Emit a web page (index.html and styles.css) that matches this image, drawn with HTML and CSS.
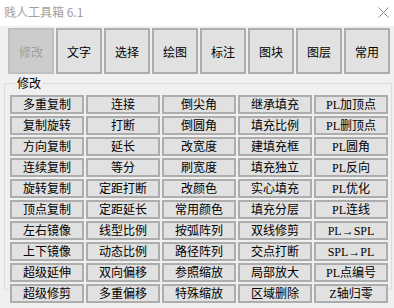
FILE: index.html
```html
<!DOCTYPE html>
<html lang="zh-CN">
<head>
  <meta charset="UTF-8">
  <title>贱人工具箱 6.1</title>
  <link rel="stylesheet" href="styles.css">
</head>
<body>
  <div class="window">
    <div class="titlebar">
      <span class="title">贱人工具箱 6.1</span>
      <svg class="close" width="11" height="11" viewBox="0 0 11 11">
        <path d="M0.5 0.5L10.5 10.5M10.5 0.5L0.5 10.5" stroke="#8c8c8c" stroke-width="1" fill="none"/>
      </svg>
    </div>

    <div class="tabs">
      <div class="tab active">修改</div>
      <div class="tab">文字</div>
      <div class="tab">选择</div>
      <div class="tab">绘图</div>
      <div class="tab">标注</div>
      <div class="tab">图块</div>
      <div class="tab">图层</div>
      <div class="tab">常用</div>
    </div>

    <fieldset class="group">
      <legend>修改</legend>
      <div class="grid">
        <div class="btn">多重复制</div><div class="btn">连接</div><div class="btn">倒尖角</div><div class="btn">继承填充</div><div class="btn">PL加顶点</div>
        <div class="btn">复制旋转</div><div class="btn">打断</div><div class="btn">倒圆角</div><div class="btn">填充比例</div><div class="btn">PL删顶点</div>
        <div class="btn">方向复制</div><div class="btn">延长</div><div class="btn">改宽度</div><div class="btn">建填充框</div><div class="btn">PL圆角</div>
        <div class="btn">连续复制</div><div class="btn">等分</div><div class="btn">刷宽度</div><div class="btn">填充独立</div><div class="btn">PL反向</div>
        <div class="btn">旋转复制</div><div class="btn">定距打断</div><div class="btn">改颜色</div><div class="btn">实心填充</div><div class="btn">PL优化</div>
        <div class="btn">顶点复制</div><div class="btn">定距延长</div><div class="btn">常用颜色</div><div class="btn">填充分层</div><div class="btn">PL连线</div>
        <div class="btn">左右镜像</div><div class="btn">线型比例</div><div class="btn">按弧阵列</div><div class="btn">双线修剪</div><div class="btn">PL→SPL</div>
        <div class="btn">上下镜像</div><div class="btn">动态比例</div><div class="btn">路径阵列</div><div class="btn">交点打断</div><div class="btn">SPL→PL</div>
        <div class="btn">超级延伸</div><div class="btn">双向偏移</div><div class="btn">参照缩放</div><div class="btn">局部放大</div><div class="btn">PL点编号</div>
        <div class="btn">超级修剪</div><div class="btn">多重偏移</div><div class="btn">特殊缩放</div><div class="btn">区域删除</div><div class="btn">Z轴归零</div>
      </div>
    </fieldset>
  </div>
</body>
</html>
```

FILE: styles.css
```css
body {
  margin: 0;
  padding: 0;
  font-family: "Noto Sans CJK SC", sans-serif;
  font-size: 12px;
}

.window {
  width: 394px;
  height: 308px;
  background: #f0f0f0;
  overflow: hidden;
}

/* title bar */

.titlebar {
  height: 26px;
  background: #ffffff;
  display: flex;
  align-items: center;
  justify-content: space-between;
  padding: 0 4px 2px 4px;
  box-sizing: border-box;
}
.title {
  color: #a0a0a0;
  font-size: 12px;
  line-height: 14px;
}
.close {
  margin-right: 1px;
}

/* tabs */

.tabs {
  display: flex;
  gap: 2px;
  padding: 2px 0 0 8px;
}
.tab {
  width: 46px;
  height: 46px;
  box-sizing: border-box;
  border: 2px solid #adadad;
  background: #e1e1e1;
  color: #000;
  display: flex;
  align-items: center;
  justify-content: center;
  font-size: 12px;
}
.tab.active {
  background: #cccccc;
  border-color: #bfbfbf;
  color: #a0a0a0;
}

/* group box */

.group {
  margin: 1px 2px 0 4px;
  padding: 4px 0 0 5px;
  border: 1px solid #dcdcdc;
  height: 215px;
  box-sizing: border-box;
}
.group legend {
  margin-left: 5px;
  padding: 0 2px;
  font-size: 12px;
  line-height: 16px;
}

.grid {
  display: grid;
  grid-template-columns: repeat(5, 74px);
  grid-auto-rows: 19px;
  gap: 2px;
}
.btn {
  box-sizing: border-box;
  border: 2px solid #adadad;
  background: #e1e1e1;
  display: flex;
  align-items: center;
  justify-content: center;
  font-family: "Liberation Serif", "Noto Sans CJK SC", serif;
  font-size: 12px;
  line-height: 14px;
  white-space: nowrap;
}
```
